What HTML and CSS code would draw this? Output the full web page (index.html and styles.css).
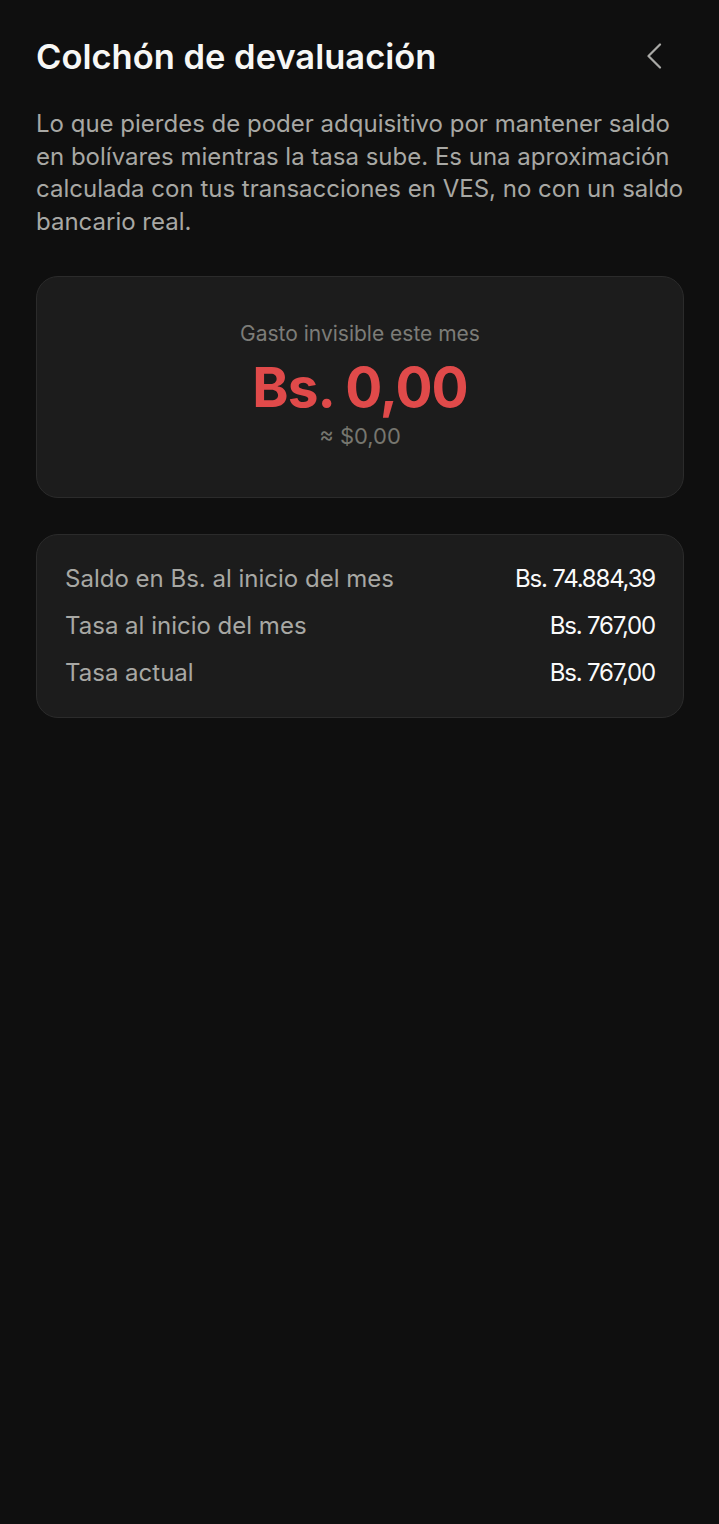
FILE: index.html
```html
<!DOCTYPE html>
<html lang="es">
<head>
<meta charset="utf-8">
<link rel="stylesheet" href="styles.css">
</head>
<body>
<main class="page">
  <header class="header">
    <h1 class="title">Colchón de devaluación</h1>
    <button class="back" aria-label="Volver">
      <svg width="16" height="26" viewBox="0 0 16 26"><path d="M14 1.5 L2.5 13 L14 24.5" fill="none" stroke="#a9a9a6" stroke-width="2.2" stroke-linecap="round" stroke-linejoin="round"/></svg>
    </button>
  </header>
  <p class="desc">Lo que pierdes de poder adquisitivo por mantener saldo en bolívares mientras la tasa sube. Es una aproximación calculada con tus transacciones en VES, no con un saldo bancario real.</p>
  <section class="card hero">
    <div class="hero-label">Gasto invisible este mes</div>
    <div class="hero-value">Bs. 0,00</div>
    <div class="hero-sub">≈ $0,00</div>
  </section>
  <section class="card details">
    <div class="row"><span class="label">Saldo en Bs. al inicio del mes</span><span class="value">Bs. 74.884,39</span></div>
    <div class="row"><span class="label">Tasa al inicio del mes</span><span class="value">Bs. 767,00</span></div>
    <div class="row"><span class="label">Tasa actual</span><span class="value">Bs. 767,00</span></div>
  </section>
</main>
</body>
</html>
```
FILE: styles.css
```css
* { box-sizing: border-box; }
html, body { margin: 0; padding: 0; background: #0f0f0f; }
body {
  font-family: Inter, "Noto Sans", sans-serif;
  color: #fff;
  min-height: 1524px;
}
.page { padding: 36px 35px 0 36px; }
.header {
  display: flex;
  align-items: center;
  justify-content: space-between;
  height: 40px;
}
.title {
  margin: 0;
  font-size: 34.5px;
  font-weight: 600;
  letter-spacing: 0;
  color: #f7f7f5;
}
.back {
  background: none;
  border: 0;
  padding: 0;
  margin-right: 22px;
  display: flex;
}
.desc {
  margin: 32px 0 0;
  font-size: 24px;
  line-height: 32.7px;
  color: #a8a8a4;
}
.card {
  background: #1c1c1c;
  border: 1px solid #2b2b2b;
  border-radius: 22px;
}
.hero {
  margin-top: 37px;
  height: 222px;
  display: flex;
  flex-direction: column;
  align-items: center;
  padding-top: 44px;
}
.hero-label {
  font-size: 21px;
  color: #7c7c78;
  line-height: 26px;
}
.hero-value {
  font-size: 55px;
  font-weight: 700;
  color: #e04a4a;
  line-height: 64px;
  letter-spacing: -1px;
  margin-top: 8px;
}
.hero-sub {
  font-size: 22px;
  color: #76766f;
  line-height: 28px;
  margin-top: 3px;
}
.details {
  margin-top: 36px;
  padding: 30px 28px;
  display: flex;
  flex-direction: column;
  gap: 19px;
}
.row {
  display: flex;
  justify-content: space-between;
  align-items: center;
  font-size: 24px;
  line-height: 28px;
}
.label { color: #a8a8a4; }
.value { color: #fafafa; letter-spacing: -1.2px; }
```
